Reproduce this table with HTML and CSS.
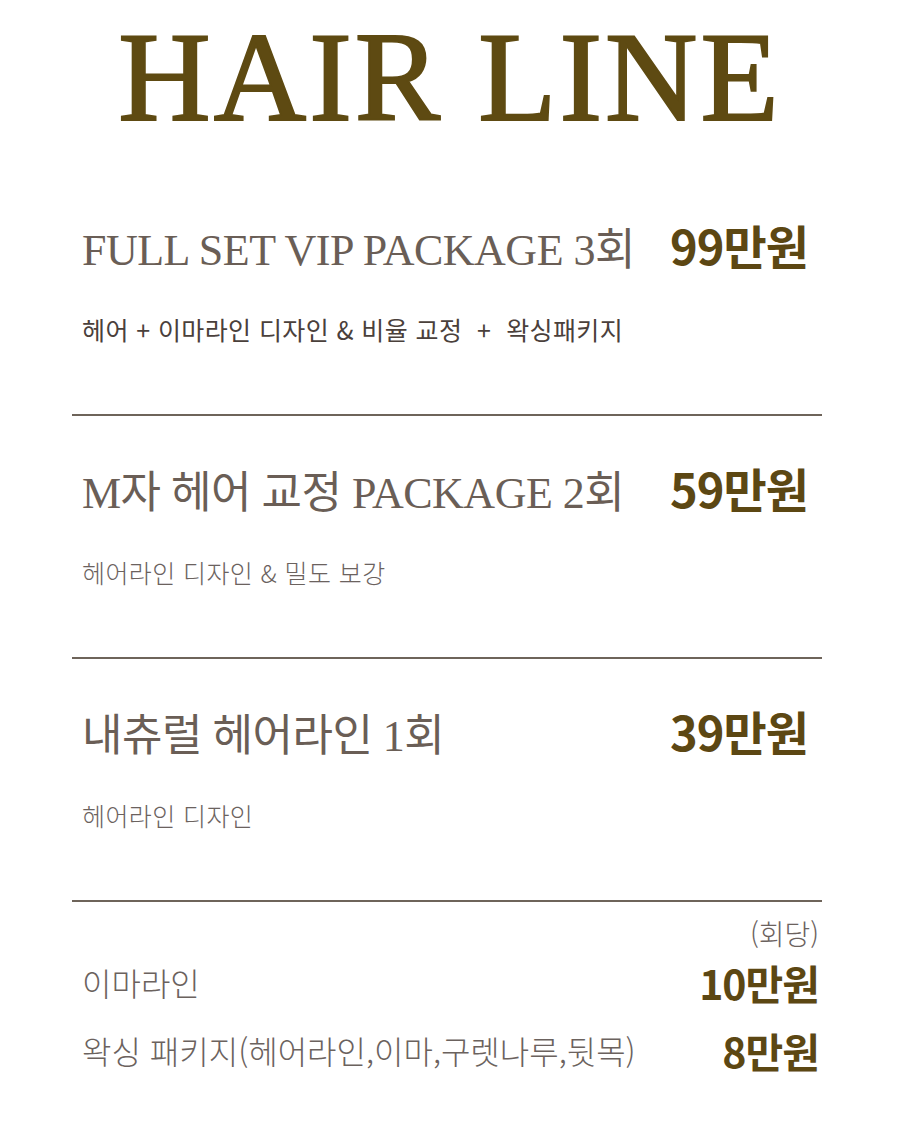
FILE: index.html
```html
<!DOCTYPE html>
<html lang="ko">
<head>
<meta charset="utf-8">
<title>HAIR LINE</title>
<link rel="stylesheet" href="styles.css">
</head>
<body>
<main class="menu">
  <h1 class="title">HAIR LINE</h1>

  <section class="item item--first">
    <div class="item-row">
      <h2 class="item-name">FULL SET VIP PACKAGE 3회</h2>
      <span class="price">99만원</span>
    </div>
    <p class="item-desc item-desc--strong">헤어 + 이마라인 디자인 &amp; 비율 교정 &nbsp;+ &nbsp;왁싱패키지</p>
  </section>

  <section class="item">
    <div class="item-row">
      <h2 class="item-name">M자 헤어 교정 PACKAGE 2회</h2>
      <span class="price">59만원</span>
    </div>
    <p class="item-desc">헤어라인 디자인 &amp; 밀도 보강</p>
  </section>

  <section class="item">
    <div class="item-row">
      <h2 class="item-name">내츄럴 헤어라인 1회</h2>
      <span class="price">39만원</span>
    </div>
    <p class="item-desc">헤어라인 디자인</p>
  </section>

  <section class="extras">
    <div class="extras-note">(회당)</div>
    <div class="extras-row">
      <span class="extras-name">이마라인</span>
      <span class="extras-price">10만원</span>
    </div>
    <div class="extras-row extras-row--second">
      <span class="extras-name">왁싱 패키지(헤어라인,이마,구렛나루,뒷목)</span>
      <span class="extras-price">8만원</span>
    </div>
  </section>
</main>
</body>
</html>
```

FILE: styles.css
```css
html, body {
  margin: 0;
  padding: 0;
  background: #ffffff;
}

body {
  font-family: "Noto Sans CJK KR", "Noto Sans", sans-serif;
  color: #6a5f58;
}

.menu {
  width: 900px;
  height: 1125px;
  box-sizing: border-box;
  padding-top: 13px;
}

.title {
  margin: 0;
  text-align: center;
  font-family: "Liberation Serif", "Times New Roman", serif;
  font-weight: 400;
  font-size: 128px;
  line-height: 128px;
  letter-spacing: 3px;
  color: #5e4a12;
  -webkit-text-stroke: 2px #5e4a12;
}

.item {
  margin: 0 78px 0 72px;
  padding: 42px 14px 68px 10px;
  border-bottom: 2px solid #6e645a;
}

.item--first {
  padding-top: 74px;
}

.item-row {
  display: flex;
  justify-content: space-between;
  align-items: baseline;
}

.item-name {
  margin: 0;
  font-family: "Liberation Serif", "Noto Sans CJK KR", serif;
  font-weight: 400;
  font-size: 44px;
  line-height: 60px;
  letter-spacing: -0.5px;
  color: #6a5e56;
}

.price {
  font-family: "Noto Sans CJK KR", "Noto Sans", sans-serif;
  font-weight: 700;
  font-size: 47px;
  line-height: 60px;
  letter-spacing: -1px;
  color: #5c4713;
}

.item-desc {
  margin: 31px 0 0;
  font-size: 25px;
  line-height: 34px;
  font-weight: 300;
  letter-spacing: 0.4px;
  color: #6b625e;
}

.item-desc--strong {
  font-weight: 400;
  color: #4a403b;
}

.extras {
  margin: 0 78px 0 72px;
  padding: 13px 3px 0 10px;
}

.extras-note {
  text-align: right;
  font-size: 28px;
  line-height: 36px;
  font-weight: 300;
  color: #6b625e;
}

.extras-row {
  display: flex;
  justify-content: space-between;
  align-items: center;
  height: 44px;
  margin-top: 9px;
}

.extras-row--second {
  margin-top: 24px;
}

.extras-name {
  font-size: 32px;
  line-height: 44px;
  font-weight: 300;
  color: #6b625e;
}

.extras-price {
  font-weight: 700;
  font-size: 41px;
  line-height: 44px;
  letter-spacing: -1px;
  color: #5c4713;
}
```
